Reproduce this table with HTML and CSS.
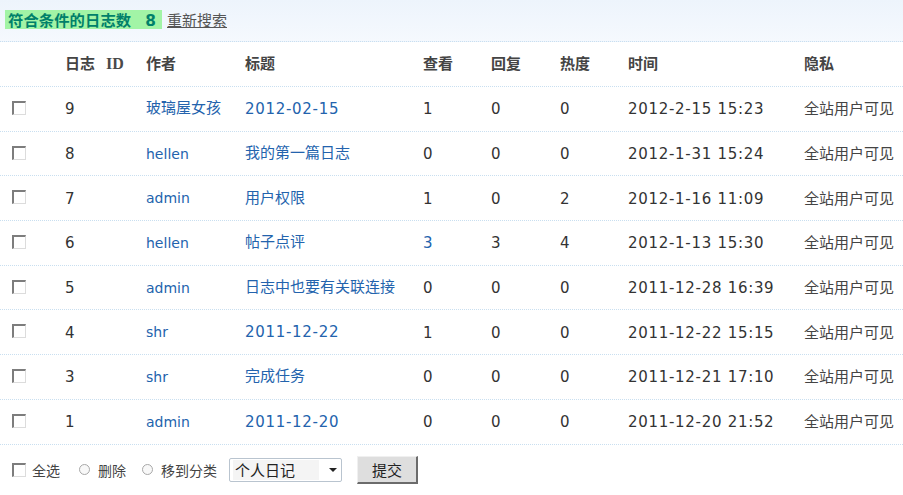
FILE: index.html
```html
<!DOCTYPE html>
<html>
<head>
<meta charset="utf-8">
<link rel="stylesheet" href="styles.css">
</head>
<body>
<div class="topbar">
  <span class="count">符合条件的日志数<span class="n">8</span></span>
  <a class="research" href="#">重新搜索</a>
</div>
<div class="grid">
  <div class="row head">
    <div class="c"></div>
    <div class="c">日志<span class="id">ID</span></div>
    <div class="c">作者</div>
    <div class="c">标题</div>
    <div class="c">查看</div>
    <div class="c">回复</div>
    <div class="c">热度</div>
    <div class="c">时间</div>
    <div class="c">隐私</div>
  </div>
  <div class="row">
    <div class="c"><span class="cb"></span></div>
    <div class="c num">9</div>
    <div class="c link cn">玻璃屋女孩</div>
    <div class="c link date">2012-02-15</div>
    <div class="c num">1</div><div class="c num">0</div><div class="c num">0</div>
    <div class="c num date">2012-2-15 15:23</div>
    <div class="c priv">全站用户可见</div>
  </div>
  <div class="row">
    <div class="c"><span class="cb"></span></div>
    <div class="c num">8</div>
    <div class="c link name">hellen</div>
    <div class="c link cn">我的第一篇日志</div>
    <div class="c num">0</div><div class="c num">0</div><div class="c num">0</div>
    <div class="c num date">2012-1-31 15:24</div>
    <div class="c priv">全站用户可见</div>
  </div>
  <div class="row">
    <div class="c"><span class="cb"></span></div>
    <div class="c num">7</div>
    <div class="c link name">admin</div>
    <div class="c link cn">用户权限</div>
    <div class="c num">1</div><div class="c num">0</div><div class="c num">2</div>
    <div class="c num date">2012-1-16 11:09</div>
    <div class="c priv">全站用户可见</div>
  </div>
  <div class="row">
    <div class="c"><span class="cb"></span></div>
    <div class="c num">6</div>
    <div class="c link name">hellen</div>
    <div class="c link cn">帖子点评</div>
    <div class="c num blue">3</div><div class="c num">3</div><div class="c num">4</div>
    <div class="c num date">2012-1-13 15:30</div>
    <div class="c priv">全站用户可见</div>
  </div>
  <div class="row">
    <div class="c"><span class="cb"></span></div>
    <div class="c num">5</div>
    <div class="c link name">admin</div>
    <div class="c link cn">日志中也要有关联连接</div>
    <div class="c num">0</div><div class="c num">0</div><div class="c num">0</div>
    <div class="c num date">2011-12-28 16:39</div>
    <div class="c priv">全站用户可见</div>
  </div>
  <div class="row">
    <div class="c"><span class="cb"></span></div>
    <div class="c num">4</div>
    <div class="c link name">shr</div>
    <div class="c link date">2011-12-22</div>
    <div class="c num">1</div><div class="c num">0</div><div class="c num">0</div>
    <div class="c num date">2011-12-22 15:15</div>
    <div class="c priv">全站用户可见</div>
  </div>
  <div class="row">
    <div class="c"><span class="cb"></span></div>
    <div class="c num">3</div>
    <div class="c link name">shr</div>
    <div class="c link cn">完成任务</div>
    <div class="c num">0</div><div class="c num">0</div><div class="c num">0</div>
    <div class="c num date">2011-12-21 17:10</div>
    <div class="c priv">全站用户可见</div>
  </div>
  <div class="row">
    <div class="c"><span class="cb"></span></div>
    <div class="c num">1</div>
    <div class="c link name">admin</div>
    <div class="c link date">2011-12-20</div>
    <div class="c num">0</div><div class="c num">0</div><div class="c num">0</div>
    <div class="c num date">2011-12-20 21:52</div>
    <div class="c priv">全站用户可见</div>
  </div>
</div>
<div class="footer">
  <span class="cb"></span><span class="lbl">全选</span>
  <span class="radio"></span><span class="lbl">删除</span>
  <span class="radio"></span><span class="lbl last">移到分类</span>
  <span class="select"><span class="opt">个人日记</span><span class="arrow"></span></span>
  <span class="btn">提交</span>
</div>
</body>
</html>
```
FILE: styles.css
```css
body {
  margin: 0;
  background: #fff;
  font-family: "DejaVu Sans", "Noto Sans CJK SC", sans-serif;
  font-size: 15px;
  color: #333;
}
.topbar {
  background: linear-gradient(#edf4fc, #f5f9fe);
  border-bottom: 1px dotted #c9dff0;
  display: flex;
  align-items: flex-start;
  padding: 10px 0 0 5px;
  box-sizing: border-box;
  height: 42px;
}
.count {
  background: #a2f4a6;
  color: #00806a;
  font-weight: bold;
  font-family: "Noto Sans CJK SC", sans-serif;
  font-size: 15.3px;
  line-height: 19px;
  height: 19px;
  width: 154px;
  padding-left: 3px;
  letter-spacing: 0.1px;
}
.count .n {
  font-family: "DejaVu Sans", sans-serif;
  margin-left: 14px;
}
.research {
  color: #555;
  text-decoration: underline;
  font-family: "Noto Sans CJK SC", sans-serif;
  font-size: 15px;
  line-height: 19px;
  margin-left: 5px;
}
.grid {
  display: flex;
  flex-direction: column;
}
.row {
  display: grid;
  grid-template-columns: 65px 81px 99px 178px 68px 69px 68px 176px 99px;
  height: 44.7px;
  border-bottom: 1px dotted #c9dff0;
  box-sizing: border-box;
  align-items: center;
}
.row.head {
  height: 45px;
}
.c {
  white-space: nowrap;
  line-height: 20px;
}
.row .c:first-child {
  padding-left: 12px;
  display: flex;
  align-items: center;
  margin-top: -2px;
}
.head .c {
  font-weight: bold;
  color: #444;
  font-family: "Noto Sans CJK SC", sans-serif;
  font-size: 15px;
  margin-top: -2px;
}
.head .id {
  font-family: "Liberation Serif", serif;
  font-weight: bold;
  font-size: 16px;
  color: #4a4a4a;
  margin-left: 11px;
}
.num {
  color: #333;
  font-size: 15px;
  margin-top: 1px;
}
.date {
  letter-spacing: 0.7px;
}
.link {
  color: #2363ad;
}
.name {
  font-size: 14px;
}
.cn {
  font-family: "Noto Sans CJK SC", sans-serif;
  margin-top: -3px;
}
.blue {
  color: #2363ad;
}
.priv {
  font-family: "Noto Sans CJK SC", sans-serif;
  color: #444;
  margin-top: -1px;
}
.cb {
  display: inline-block;
  width: 14px;
  height: 14px;
  box-sizing: border-box;
  border-style: solid;
  border-width: 2px 1px 1px 2px;
  border-color: #7d7d7d #dcdcdc #dcdcdc #7d7d7d;
  background: #fff;
}
.footer {
  display: flex;
  align-items: center;
  height: 50px;
  padding-left: 12px;
  font-family: "Noto Sans CJK SC", sans-serif;
  font-size: 14px;
  color: #444;
}
.lbl {
  margin-left: 6px;
  margin-right: 19px;
}
.radio {
  display: inline-block;
  width: 11px;
  height: 11px;
  box-sizing: border-box;
  border-radius: 50%;
  border: 1px solid #a8a8a8;
  background: #f8f8f8;
}
.radio + .lbl {
  margin-left: 8px;
  margin-right: 16px;
}
.radio + .lbl.last {
  margin-right: 12px;
}
.select {
  display: inline-flex;
  align-items: center;
  width: 113px;
  height: 24px;
  box-sizing: border-box;
  border: 1px solid #b9c4cf;
  border-radius: 2px;
  background: #fff;
  padding-left: 3px;
  color: #222;
  font-size: 15px;
}
.opt {
  background: #f4f4f4;
  width: 84px;
  line-height: 20px;
  padding-left: 2px;
}
.arrow {
  width: 0;
  height: 0;
  border-left: 4px solid transparent;
  border-right: 4px solid transparent;
  border-top: 4px solid #222;
  margin-left: 10px;
}
.btn {
  display: inline-flex;
  align-items: center;
  justify-content: center;
  margin-left: 15px;
  width: 61px;
  height: 28px;
  box-sizing: border-box;
  background: #dedede;
  border-style: solid;
  border-width: 1px 2px 2px 1px;
  border-color: #f0f0f0 #6b6b6b #6b6b6b #f0f0f0;
  color: #222;
  font-size: 15px;
}
```
